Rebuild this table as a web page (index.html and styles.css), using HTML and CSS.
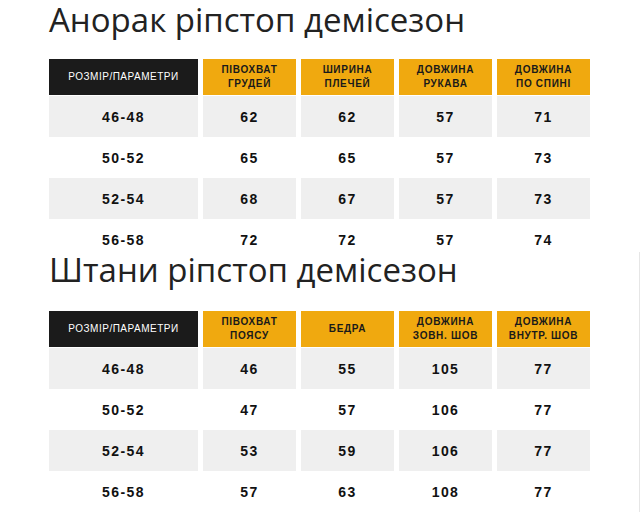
FILE: index.html
```html
<!DOCTYPE html>
<html lang="uk">
<head>
<meta charset="utf-8">
<link rel="stylesheet" href="styles.css">
</head>
<body>
<section class="block block-first">
  <h2 class="title">Анорак ріпстоп демісезон</h2>
  <div class="grid">
    <div class="th th-dark">РОЗМІР/ПАРАМЕТРИ</div>
    <div class="th">ПІВОХВАТ<br>ГРУДЕЙ</div>
    <div class="th">ШИРИНА<br>ПЛЕЧЕЙ</div>
    <div class="th">ДОВЖИНА<br>РУКАВА</div>
    <div class="th">ДОВЖИНА<br>ПО СПИНІ</div>

    <div class="td odd">46-48</div><div class="td odd">62</div><div class="td odd">62</div><div class="td odd">57</div><div class="td odd">71</div>
    <div class="td">50-52</div><div class="td">65</div><div class="td">65</div><div class="td">57</div><div class="td">73</div>
    <div class="td odd">52-54</div><div class="td odd">68</div><div class="td odd">67</div><div class="td odd">57</div><div class="td odd">73</div>
    <div class="td">56-58</div><div class="td">72</div><div class="td">72</div><div class="td">57</div><div class="td">74</div>
  </div>
</section>
<section class="block block-second">
  <h2 class="title">Штани ріпстоп демісезон</h2>
  <div class="grid">
    <div class="th th-dark">РОЗМІР/ПАРАМЕТРИ</div>
    <div class="th">ПІВОХВАТ<br>ПОЯСУ</div>
    <div class="th">БЕДРА</div>
    <div class="th">ДОВЖИНА<br>ЗОВН. ШОВ</div>
    <div class="th">ДОВЖИНА<br>ВНУТР. ШОВ</div>

    <div class="td odd">46-48</div><div class="td odd">46</div><div class="td odd">55</div><div class="td odd">105</div><div class="td odd">77</div>
    <div class="td">50-52</div><div class="td">47</div><div class="td">57</div><div class="td">106</div><div class="td">77</div>
    <div class="td odd">52-54</div><div class="td odd">53</div><div class="td odd">59</div><div class="td odd">106</div><div class="td odd">77</div>
    <div class="td">56-58</div><div class="td">57</div><div class="td">63</div><div class="td">108</div><div class="td">77</div>
  </div>
</section>
</body>
</html>
```

FILE: styles.css
```css
html, body {
  margin: 0;
  padding: 0;
  background: #fff;
}

body {
  width: 640px;
  height: 512px;
  overflow: hidden;
  font-family: "Liberation Sans", Arial, sans-serif;
}

.block {
  padding-left: 49px;
}

.block-first {
  padding-top: 2px;
}

.block-first .grid {
  margin-top: 21px;
}

.block-second {
  margin-top: -8px;
  border-right: 1px solid #e6e6e6;
}

.title {
  margin: 0;
  font-family: "Open Sans", sans-serif;
  font-weight: 400;
  font-size: 33px;
  line-height: 36px;
  color: #222;
  white-space: nowrap;
}

.grid {
  display: grid;
  grid-template-columns: 149px repeat(4, 93px);
  grid-template-rows: 37px;
  grid-auto-rows: 41px;
  column-gap: 5px;
  margin-top: 23px;
}

.block-second .grid {
  margin-top: 23px;
}

.th {
  height: 36px;
  align-self: start;
  background: #f0a90f;
  color: #1a1a1a;
  font-size: 10px;
  font-weight: 700;
  letter-spacing: 0.7px;
  line-height: 14px;
  display: flex;
  align-items: center;
  justify-content: center;
  text-align: center;
}

.th-dark {
  background: #1b1b1b;
  color: #fff;
  font-weight: 400;
  letter-spacing: 0.5px;
}

.td {
  display: flex;
  align-items: center;
  justify-content: center;
  font-size: 14px;
  font-weight: 700;
  letter-spacing: 1.4px;
  color: #111;
}

.odd {
  background: #efefef;
}
```
